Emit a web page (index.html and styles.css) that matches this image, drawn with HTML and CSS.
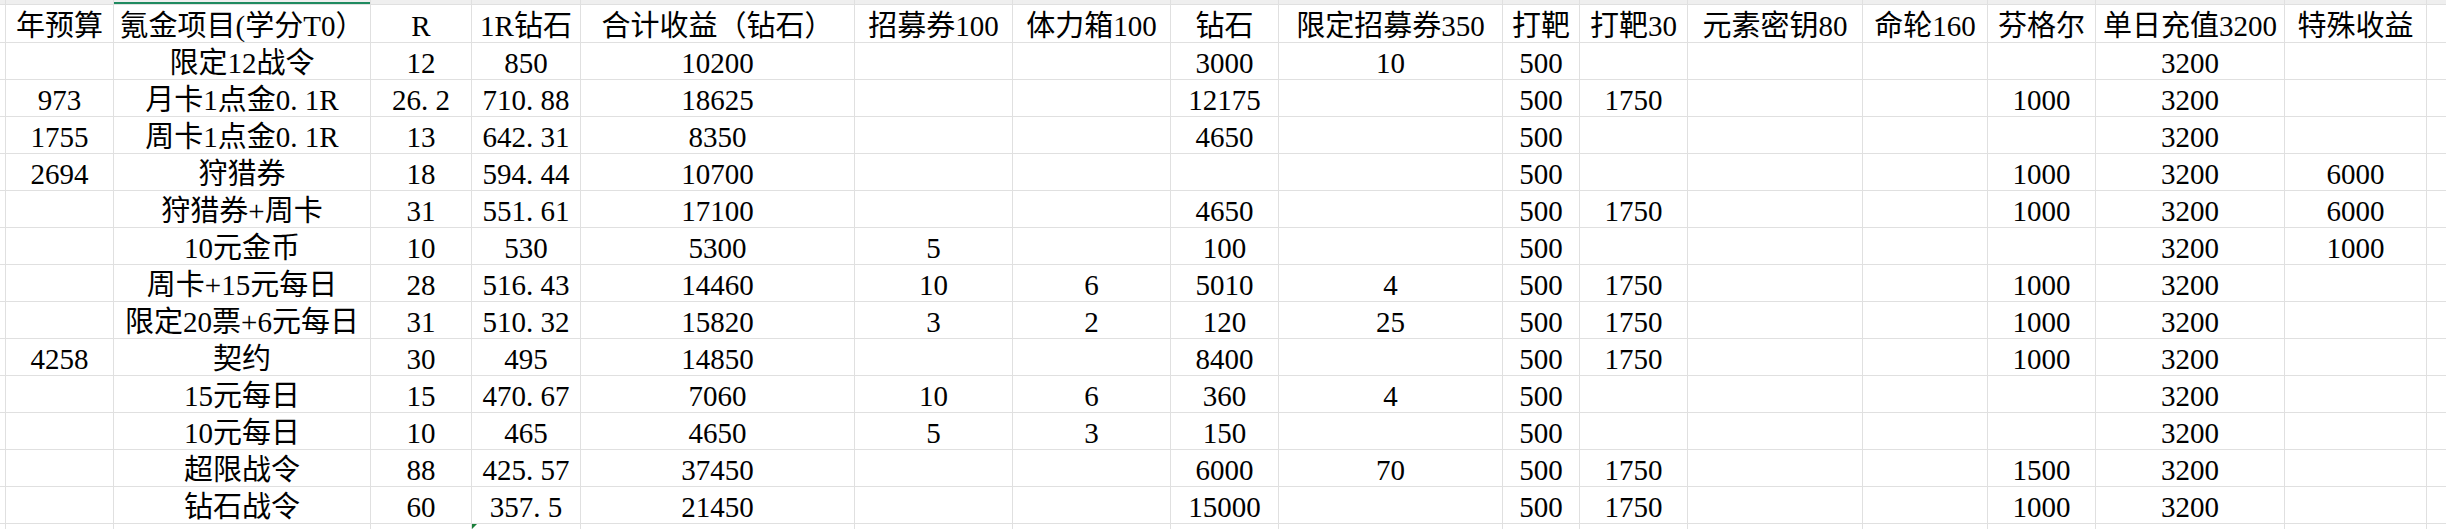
FILE: index.html
```html
<!DOCTYPE html>
<html lang="zh-CN">
<head>
<meta charset="utf-8">
<title>氪金项目</title>
<link rel="stylesheet" href="styles.css">
</head>
<body>
<div class="sheet">
<div class="hd"></div><div class="hd"></div><div class="hd sel"></div><div class="hd"></div><div class="hd"></div><div class="hd"></div><div class="hd"></div><div class="hd"></div><div class="hd"></div><div class="hd"></div><div class="hd"></div><div class="hd"></div><div class="hd"></div><div class="hd"></div><div class="hd"></div><div class="hd"></div><div class="hd"></div><div class="hd"></div>

<div class="ls"></div><div class="c">年预算</div><div class="c">氪金项目(学分T0）</div><div class="c">R</div><div class="c">1R钻石</div><div class="c">合计收益（钻石）</div><div class="c">招募券100</div><div class="c">体力箱100</div><div class="c">钻石</div><div class="c">限定招募券350</div><div class="c">打靶</div><div class="c">打靶30</div><div class="c">元素密钥80</div><div class="c">命轮160</div><div class="c">芬格尔</div><div class="c">单日充值3200</div><div class="c">特殊收益</div><div class="c"></div>

<div class="ls"></div><div class="c"></div><div class="c">限定12战令</div><div class="c">12</div><div class="c">850</div><div class="c">10200</div><div class="c"></div><div class="c"></div><div class="c">3000</div><div class="c">10</div><div class="c">500</div><div class="c"></div><div class="c"></div><div class="c"></div><div class="c"></div><div class="c">3200</div><div class="c"></div><div class="c"></div>

<div class="ls"></div><div class="c">973</div><div class="c">月卡1点金0<span class="dot">.</span>1R</div><div class="c">26<span class="dot">.</span>2</div><div class="c">710<span class="dot">.</span>88</div><div class="c">18625</div><div class="c"></div><div class="c"></div><div class="c">12175</div><div class="c"></div><div class="c">500</div><div class="c">1750</div><div class="c"></div><div class="c"></div><div class="c">1000</div><div class="c">3200</div><div class="c"></div><div class="c"></div>

<div class="ls"></div><div class="c">1755</div><div class="c">周卡1点金0<span class="dot">.</span>1R</div><div class="c">13</div><div class="c">642<span class="dot">.</span>31</div><div class="c">8350</div><div class="c"></div><div class="c"></div><div class="c">4650</div><div class="c"></div><div class="c">500</div><div class="c"></div><div class="c"></div><div class="c"></div><div class="c"></div><div class="c">3200</div><div class="c"></div><div class="c"></div>

<div class="ls"></div><div class="c">2694</div><div class="c">狩猎券</div><div class="c">18</div><div class="c">594<span class="dot">.</span>44</div><div class="c">10700</div><div class="c"></div><div class="c"></div><div class="c"></div><div class="c"></div><div class="c">500</div><div class="c"></div><div class="c"></div><div class="c"></div><div class="c">1000</div><div class="c">3200</div><div class="c">6000</div><div class="c"></div>

<div class="ls"></div><div class="c"></div><div class="c">狩猎券+周卡</div><div class="c">31</div><div class="c">551<span class="dot">.</span>61</div><div class="c">17100</div><div class="c"></div><div class="c"></div><div class="c">4650</div><div class="c"></div><div class="c">500</div><div class="c">1750</div><div class="c"></div><div class="c"></div><div class="c">1000</div><div class="c">3200</div><div class="c">6000</div><div class="c"></div>

<div class="ls"></div><div class="c"></div><div class="c">10元金币</div><div class="c">10</div><div class="c">530</div><div class="c">5300</div><div class="c">5</div><div class="c"></div><div class="c">100</div><div class="c"></div><div class="c">500</div><div class="c"></div><div class="c"></div><div class="c"></div><div class="c"></div><div class="c">3200</div><div class="c">1000</div><div class="c"></div>

<div class="ls"></div><div class="c"></div><div class="c">周卡+15元每日</div><div class="c">28</div><div class="c">516<span class="dot">.</span>43</div><div class="c">14460</div><div class="c">10</div><div class="c">6</div><div class="c">5010</div><div class="c">4</div><div class="c">500</div><div class="c">1750</div><div class="c"></div><div class="c"></div><div class="c">1000</div><div class="c">3200</div><div class="c"></div><div class="c"></div>

<div class="ls"></div><div class="c"></div><div class="c">限定20票+6元每日</div><div class="c">31</div><div class="c">510<span class="dot">.</span>32</div><div class="c">15820</div><div class="c">3</div><div class="c">2</div><div class="c">120</div><div class="c">25</div><div class="c">500</div><div class="c">1750</div><div class="c"></div><div class="c"></div><div class="c">1000</div><div class="c">3200</div><div class="c"></div><div class="c"></div>

<div class="ls"></div><div class="c">4258</div><div class="c">契约</div><div class="c">30</div><div class="c">495</div><div class="c">14850</div><div class="c"></div><div class="c"></div><div class="c">8400</div><div class="c"></div><div class="c">500</div><div class="c">1750</div><div class="c"></div><div class="c"></div><div class="c">1000</div><div class="c">3200</div><div class="c"></div><div class="c"></div>

<div class="ls"></div><div class="c"></div><div class="c">15元每日</div><div class="c">15</div><div class="c">470<span class="dot">.</span>67</div><div class="c">7060</div><div class="c">10</div><div class="c">6</div><div class="c">360</div><div class="c">4</div><div class="c">500</div><div class="c"></div><div class="c"></div><div class="c"></div><div class="c"></div><div class="c">3200</div><div class="c"></div><div class="c"></div>

<div class="ls"></div><div class="c"></div><div class="c">10元每日</div><div class="c">10</div><div class="c">465</div><div class="c">4650</div><div class="c">5</div><div class="c">3</div><div class="c">150</div><div class="c"></div><div class="c">500</div><div class="c"></div><div class="c"></div><div class="c"></div><div class="c"></div><div class="c">3200</div><div class="c"></div><div class="c"></div>

<div class="ls"></div><div class="c"></div><div class="c">超限战令</div><div class="c">88</div><div class="c">425<span class="dot">.</span>57</div><div class="c">37450</div><div class="c"></div><div class="c"></div><div class="c">6000</div><div class="c">70</div><div class="c">500</div><div class="c">1750</div><div class="c"></div><div class="c"></div><div class="c">1500</div><div class="c">3200</div><div class="c"></div><div class="c"></div>

<div class="ls"></div><div class="c"></div><div class="c">钻石战令</div><div class="c">60</div><div class="c">357<span class="dot">.</span>5</div><div class="c">21450</div><div class="c"></div><div class="c"></div><div class="c">15000</div><div class="c"></div><div class="c">500</div><div class="c">1750</div><div class="c"></div><div class="c"></div><div class="c">1000</div><div class="c">3200</div><div class="c"></div><div class="c"></div>

<div class="ls"></div><div class="c"></div><div class="c"></div><div class="c"></div><div class="c flag"></div><div class="c"></div><div class="c"></div><div class="c"></div><div class="c"></div><div class="c"></div><div class="c"></div><div class="c"></div><div class="c"></div><div class="c"></div><div class="c"></div><div class="c"></div><div class="c"></div><div class="c"></div>
</div>
</body>
</html>
```

FILE: styles.css
```css
html, body {
  margin: 0;
  padding: 0;
  background: #ffffff;
  overflow: hidden;
}

body {
  width: 2446px;
  height: 529px;
}

.sheet {
  display: grid;
  grid-template-columns: 5px 107px 256px 100px 108px 273px 157px 157px 107px 223px 76px 107px 174px 124px 107px 188px 141px 1fr;
  grid-template-rows: 4px 37px repeat(14, 36px);
  gap: 1px;
  background: #e0e0e0;
  height: 529px;
  overflow: hidden;
}

.hd {
  background: #efefef;
}

.hd.sel {
  background: linear-gradient(to bottom, #efefef 0 2px, #1f8a60 2px);
}

.ls {
  background: #ffffff;
}

.c {
  background: #ffffff;
  display: flex;
  align-items: center;
  justify-content: center;
  padding-top: 4px;
  box-sizing: border-box;
  font-family: "Liberation Serif", "Noto Sans CJK SC", serif;
  font-size: 29px;
  line-height: 32px;
  color: #000000;
  white-space: nowrap;
  overflow: hidden;
}

.dot {
  display: inline-block;
  width: 0.5em;
}

.flag {
  position: relative;
}

.flag::before {
  content: "";
  position: absolute;
  left: 0;
  top: 0;
  border-top: 5px solid #1b7f3a;
  border-right: 5px solid transparent;
}
```
